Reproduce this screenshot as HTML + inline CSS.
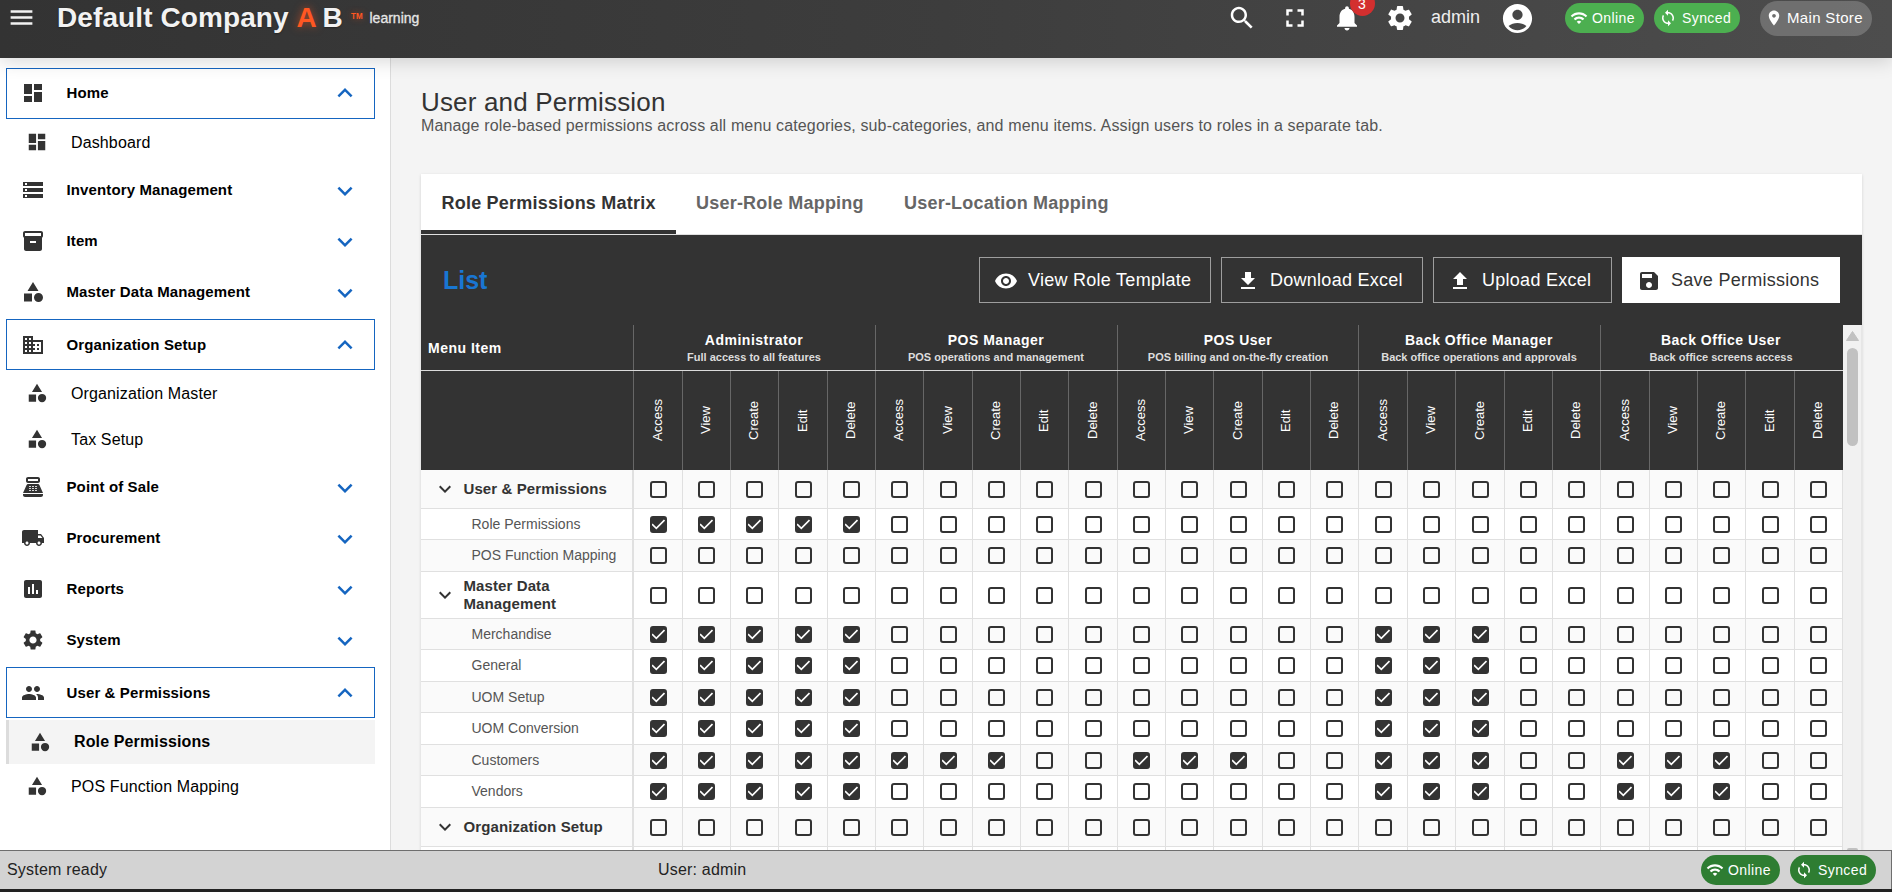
<!DOCTYPE html><html><head><meta charset="utf-8"><title>User and Permission</title><style>
*{box-sizing:border-box;margin:0;padding:0}
html,body{width:1892px;height:892px;overflow:hidden;background:#f4f4f4;font-family:"Liberation Sans",sans-serif}
.ic{position:absolute;display:block}
.t{position:absolute;white-space:nowrap;line-height:1}
#hdr{position:absolute;left:0;top:0;width:1892px;height:57.5px;background:linear-gradient(90deg,#333 0%,#3d3d3d 50%,#4d4d4d 100%);box-shadow:0 3px 18px rgba(0,0,0,.16);z-index:5}
#side{position:absolute;left:0;top:57px;width:391px;height:793px;background:#fff;border-right:1px solid #dcdcdc;z-index:2}
.chip{position:absolute;height:30px;border-radius:15px;background:#4caf50;color:#fff;font-size:14px}
.sbox{position:absolute;left:6px;width:369px;height:51px;border:1px solid #1565c0}
.cat{font-size:15px;font-weight:bold;color:#000;letter-spacing:.12px}
.sub{font-size:16px;color:#000;letter-spacing:.13px}

.btn{position:absolute;top:257px;height:46px;border:1px solid #9e9e9e;color:#fff;font-size:18px}
.rh{font-size:14px;font-weight:bold;color:#fff;letter-spacing:.5px}
.rs{font-size:11px;font-weight:bold;color:#ddd}
.vl{position:absolute;top:371px;height:99px;width:1px;background:#676767}
.vt{position:absolute;font-size:13px;color:#fff;line-height:13px;writing-mode:vertical-rl;transform:rotate(180deg)}
.row{position:absolute;left:421px;width:1422px}
.dl{position:absolute;width:1px;background:#e0e0e0}
.cb{position:absolute;width:17px;height:17px;border:2px solid #333;border-radius:3px;background:#fff}
.cb.on{background:#333}
.lab{position:absolute;font-size:14px;color:#555;line-height:14px;white-space:nowrap}
.grp{position:absolute;font-size:15px;font-weight:bold;color:#333;line-height:18px;white-space:nowrap}
</style></head><body>

<div id="hdr">
<svg class="ic" style="left:6.5px;top:3px;width:29px;height:29px;" viewBox="0 0 24 24"><path fill="#f2f2f2" d="M3 18h18v-2H3v2zm0-5h18v-2H3v2zm0-7v2h18V6H3z"/></svg>
<div class="t" style="left:57px;top:4px;font-size:28px;font-weight:bold;color:#f2f2f2;line-height:28px;letter-spacing:.1px;text-shadow:0 1px 2px rgba(0,0,0,.35)">Default Company</div>
<div class="t" style="left:296.5px;top:4px;font-size:28px;font-weight:bold;color:#ff5722;line-height:28px;text-shadow:0 0 8px rgba(255,87,34,.6)">A</div>
<div class="t" style="left:322.5px;top:4px;font-size:28px;font-weight:bold;color:#f2f2f2;line-height:28px;text-shadow:0 1px 2px rgba(0,0,0,.35)">B</div>
<div class="t" style="left:351px;top:12.3px;font-size:8px;font-weight:bold;color:#ff5722;line-height:8px;transform:scaleY(1.12);transform-origin:0 0;text-shadow:0 0 6px rgba(255,87,34,.5)">TM</div>
<div class="t" style="left:369.5px;top:11px;font-size:14px;color:#e6e6e6;line-height:14px;-webkit-text-stroke:.3px #e6e6e6">learning</div>
<svg class="ic" style="left:1227px;top:3px;width:30px;height:30px;" viewBox="0 0 24 24"><path fill="#fff" d="M15.5 14h-.79l-.28-.27C15.41 12.59 16 11.11 16 9.5 16 5.91 13.09 3 9.5 3S3 5.91 3 9.5 5.91 16 9.5 16c1.61 0 3.09-.59 4.23-1.57l.27.28v.79l5 4.99L20.49 19l-4.99-5zm-6 0C7.01 14 5 11.99 5 9.5S7.01 5 9.5 5 14 7.01 14 9.5 11.99 14 9.5 14z"/></svg>
<svg class="ic" style="left:1280px;top:3px;width:30px;height:30px;" viewBox="0 0 24 24"><path fill="#fff" d="M7 14H5v5h5v-2H7v-3zm-2-4h2V7h3V5H5v5zm12 7h-3v2h5v-5h-2v3zM14 5v2h3v3h2V5h-5z"/></svg>
<svg class="ic" style="left:1332px;top:3px;width:30px;height:30px;" viewBox="0 0 24 24"><path fill="#fff" d="M12 22c1.1 0 2-.9 2-2h-4c0 1.1.89 2 2 2zm6-6v-5c0-3.07-1.64-5.64-4.5-6.32V4c0-.83-.67-1.5-1.5-1.5s-1.5.67-1.5 1.5v.68C7.63 5.36 6 7.92 6 11v5l-2 2v1h16v-1l-2-2z"/></svg>
<div style="position:absolute;left:1349.5px;top:-9.3px;width:25px;height:25px;border-radius:12.5px;background:#d32f2f;color:#fff;font-size:14px;line-height:27px;text-align:center">3</div>
<svg class="ic" style="left:1385px;top:3px;width:30px;height:30px;" viewBox="0 0 24 24"><path fill="#fff" d="M19.14 12.94c.04-.3.06-.61.06-.94 0-.32-.02-.64-.07-.94l2.03-1.58c.18-.14.23-.41.12-.61l-1.92-3.32c-.12-.22-.37-.29-.59-.22l-2.39.96c-.5-.38-1.03-.7-1.62-.94l-.36-2.54c-.04-.24-.24-.41-.48-.41h-3.84c-.24 0-.43.17-.47.41l-.36 2.54c-.59.24-1.13.57-1.62.94l-2.39-.96c-.22-.08-.47 0-.59.22L2.74 8.87c-.12.21-.08.47.12.61l2.03 1.58c-.05.3-.09.63-.09.94s.02.64.07.94l-2.03 1.58c-.18.14-.23.41-.12.61l1.92 3.32c.12.22.37.29.59.22l2.39-.96c.5.38 1.03.7 1.62.94l.36 2.54c.05.24.24.41.48.41h3.84c.24 0 .44-.17.47-.41l.36-2.54c.59-.24 1.13-.56 1.62-.94l2.39.96c.22.08.47 0 .59-.22l1.92-3.32c.12-.22.07-.47-.12-.61l-2.01-1.58zM12 15.6c-1.98 0-3.6-1.62-3.6-3.6s1.62-3.6 3.6-3.6 3.6 1.62 3.6 3.6-1.62 3.6-3.6 3.6z"/></svg>
<div class="t" style="left:1431px;top:7.5px;font-size:18px;color:#eee;line-height:18px">admin</div>
<svg class="ic" style="left:1500px;top:1px;width:35px;height:35px;" viewBox="0 0 24 24"><path fill="#fff" d="M12 2C6.48 2 2 6.48 2 12s4.48 10 10 10 10-4.48 10-10S17.52 2 12 2zm0 4c1.93 0 3.5 1.57 3.5 3.5S13.93 13 12 13s-3.5-1.57-3.5-3.5S10.07 6 12 6zm0 14c-2.03 0-4.43-.82-6.14-2.88C7.55 15.8 9.64 15 12 15s4.45.8 6.14 2.12C16.43 19.18 14.03 20 12 20z"/></svg>
<div class="chip" style="left:1565px;top:3px;width:79px"><svg class="ic" style="left:5px;top:6px;width:18px;height:18px;" viewBox="0 0 24 24"><path fill="#fff" d="M1 9l2 2c4.97-4.97 13.03-4.97 18 0l2-2C16.93 2.93 7.08 2.93 1 9zm8 8l3 3 3-3c-1.65-1.66-4.34-1.66-6 0zm-4-4l2 2c2.76-2.76 7.24-2.76 10 0l2-2C15.14 9.14 8.87 9.14 5 13z"/></svg><div class="t" style="left:27px;top:8px;font-size:14px;letter-spacing:.4px">Online</div></div>
<div class="chip" style="left:1654px;top:3px;width:86px"><svg class="ic" style="left:5px;top:6px;width:18px;height:18px;" viewBox="0 0 24 24"><path fill="#fff" d="M12 4V1L8 5l4 4V6c3.31 0 6 2.69 6 6 0 1.01-.25 1.97-.7 2.8l1.46 1.46C19.54 15.03 20 13.57 20 12c0-4.42-3.58-8-8-8zm0 14c-3.31 0-6-2.69-6-6 0-1.01.25-1.97.7-2.8L5.24 7.74C4.46 8.97 4 10.43 4 12c0 4.42 3.58 8 8 8v3l4-4-4-4v3z"/></svg><div class="t" style="left:28px;top:8px;font-size:14px;letter-spacing:.4px">Synced</div></div>
<div class="chip" style="left:1760px;top:1px;width:112px;height:35px;border-radius:17.5px;background:rgba(255,255,255,.2)"><svg class="ic" style="left:5px;top:7.5px;width:18px;height:18px;" viewBox="0 0 24 24"><path fill="#fff" d="M12 2C8.13 2 5 5.13 5 9c0 5.25 7 13 7 13s7-7.75 7-13c0-3.87-3.13-7-7-7zm0 9.5c-1.38 0-2.5-1.12-2.5-2.5s1.12-2.5 2.5-2.5 2.5 1.12 2.5 2.5-1.12 2.5-2.5 2.5z"/></svg><div class="t" style="left:27px;top:9px;font-size:15px;letter-spacing:.33px">Main Store</div></div>
</div>
<div id="side">
<div class="sbox" style="top:11px"></div>
<svg class="ic" style="left:21px;top:23.599999999999994px;width:24px;height:24px;" viewBox="0 0 24 24"><path fill="#333" d="M3 13h8V3H3v10zm0 8h8v-6H3v6zm10 0h8V11h-8v10zm0-18v6h8V3h-8z"/></svg>
<div class="t cat" style="left:66.5px;top:27.599999999999994px;line-height:16px">Home</div>
<svg class="ic" style="left:330px;top:21.099999999999994px;width:30px;height:30px;" viewBox="0 0 24 24"><path fill="#1565c0" d="M12 8l-6 6 1.41 1.41L12 10.83l4.59 4.58L18 14z"/></svg>
<svg class="ic" style="left:21px;top:121.0px;width:24px;height:24px;" viewBox="0 0 24 24"><path fill="#333" d="M2 20h20v-4H2v4zm2-3h2v2H4v-2zM2 4v4h20V4H2zm4 3H4V5h2v2zm-4 7h20v-4H2v4zm2-3h2v2H4v-2z"/></svg>
<div class="t cat" style="left:66.5px;top:125.0px;line-height:16px">Inventory Management</div>
<svg class="ic" style="left:330px;top:118.5px;width:30px;height:30px;" viewBox="0 0 24 24"><path fill="#1565c0" d="M16.59 8.59L12 13.17 7.41 8.59 6 10l6 6 6-6z"/></svg>
<svg class="ic" style="left:21px;top:172.0px;width:24px;height:24px;" viewBox="0 0 24 24"><path fill="#333" d="M20 2H4c-1 0-2 .9-2 2v3.01c0 .72.43 1.34 1 1.69V20c0 1.1 1.1 2 2 2h14c.9 0 2-.9 2-2V8.7c.57-.35 1-.97 1-1.69V4c0-1.1-1-2-2-2zm-5 12H9v-2h6v2zm5-7H4V4l16-.02V7z"/></svg>
<div class="t cat" style="left:66.5px;top:176.0px;line-height:16px">Item</div>
<svg class="ic" style="left:330px;top:169.5px;width:30px;height:30px;" viewBox="0 0 24 24"><path fill="#1565c0" d="M16.59 8.59L12 13.17 7.41 8.59 6 10l6 6 6-6z"/></svg>
<svg class="ic" style="left:21px;top:223.0px;width:24px;height:24px;" viewBox="0 0 24 24"><path fill="#333" d="M12 2l-5.5 9h11zM17.5 13a4.5 4.5 0 1 0 0 9a4.5 4.5 0 1 0 0-9zM3 13.5h8v8H3z"/></svg>
<div class="t cat" style="left:66.5px;top:227.0px;line-height:16px">Master Data Management</div>
<svg class="ic" style="left:330px;top:220.5px;width:30px;height:30px;" viewBox="0 0 24 24"><path fill="#1565c0" d="M16.59 8.59L12 13.17 7.41 8.59 6 10l6 6 6-6z"/></svg>
<div class="sbox" style="top:262px"></div>
<svg class="ic" style="left:21px;top:275.8px;width:24px;height:24px;" viewBox="0 0 24 24"><path fill="#333" d="M12 7V3H2v18h20V7H12zM6 19H4v-2h2v2zm0-4H4v-2h2v2zm0-4H4V9h2v2zm0-4H4V5h2v2zm4 12H8v-2h2v2zm0-4H8v-2h2v2zm0-4H8V9h2v2zm0-4H8V5h2v2zm10 12h-8v-2h2v-2h-2v-2h2v-2h-2V9h8v10zm-2-8h-2v2h2v-2zm0 4h-2v2h2v-2z"/></svg>
<div class="t cat" style="left:66.5px;top:279.8px;line-height:16px">Organization Setup</div>
<svg class="ic" style="left:330px;top:273.3px;width:30px;height:30px;" viewBox="0 0 24 24"><path fill="#1565c0" d="M12 8l-6 6 1.41 1.41L12 10.83l4.59 4.58L18 14z"/></svg>
<svg class="ic" style="left:21px;top:418.0px;width:24px;height:24px;" viewBox="0 0 24 24"><path fill="#333" d="M17 2H7c-1.1 0-2 .9-2 2v2c0 1.1.9 2 2 2h10c1.1 0 2-.9 2-2V4c0-1.1-.9-2-2-2zm0 4H7V4h10v2zm3 16H4c-1.1 0-2-.9-2-2v-1h20v1c0 1.1-.9 2-2 2zm-1.47-11.81C18.21 9.47 17.49 9 16.7 9H7.3c-.79 0-1.51.47-1.83 1.19L2 18h20l-3.47-7.81zM9.5 16h-1c-.28 0-.5-.22-.5-.5s.22-.5.5-.5h1c.28 0 .5.22.5.5s-.22.5-.5.5zm0-2h-1c-.28 0-.5-.22-.5-.5s.22-.5.5-.5h1c.28 0 .5.22.5.5s-.22.5-.5.5zm0-2h-1c-.28 0-.5-.22-.5-.5s.22-.5.5-.5h1c.28 0 .5.22.5.5s-.22.5-.5.5zm3 4h-1c-.28 0-.5-.22-.5-.5s.22-.5.5-.5h1c.28 0 .5.22.5.5s-.22.5-.5.5zm0-2h-1c-.28 0-.5-.22-.5-.5s.22-.5.5-.5h1c.28 0 .5.22.5.5s-.22.5-.5.5zm0-2h-1c-.28 0-.5-.22-.5-.5s.22-.5.5-.5h1c.28 0 .5.22.5.5s-.22.5-.5.5zm3 4h-1c-.28 0-.5-.22-.5-.5s.22-.5.5-.5h1c.28 0 .5.22.5.5s-.22.5-.5.5zm0-2h-1c-.28 0-.5-.22-.5-.5s.22-.5.5-.5h1c.28 0 .5.22.5.5s-.22.5-.5.5zm0-2h-1c-.28 0-.5-.22-.5-.5s.22-.5.5-.5h1c.28 0 .5.22.5.5s-.22.5-.5.5z"/></svg>
<div class="t cat" style="left:66.5px;top:422.0px;line-height:16px">Point of Sale</div>
<svg class="ic" style="left:330px;top:415.5px;width:30px;height:30px;" viewBox="0 0 24 24"><path fill="#1565c0" d="M16.59 8.59L12 13.17 7.41 8.59 6 10l6 6 6-6z"/></svg>
<svg class="ic" style="left:21px;top:469.0px;width:24px;height:24px;" viewBox="0 0 24 24"><path fill="#333" d="M20 8h-3V4H3c-1.1 0-2 .9-2 2v11h2c0 1.66 1.34 3 3 3s3-1.34 3-3h6c0 1.66 1.34 3 3 3s3-1.34 3-3h2v-5l-3-4zM6 18.5c-.83 0-1.5-.67-1.5-1.5s.67-1.5 1.5-1.5 1.5.67 1.5 1.5-.67 1.5-1.5 1.5zm13.5-9l1.96 2.5H17V9.5h2.5zm-1.5 9c-.83 0-1.5-.67-1.5-1.5s.67-1.5 1.5-1.5 1.5.67 1.5 1.5-.67 1.5-1.5 1.5z"/></svg>
<div class="t cat" style="left:66.5px;top:473.0px;line-height:16px">Procurement</div>
<svg class="ic" style="left:330px;top:466.5px;width:30px;height:30px;" viewBox="0 0 24 24"><path fill="#1565c0" d="M16.59 8.59L12 13.17 7.41 8.59 6 10l6 6 6-6z"/></svg>
<svg class="ic" style="left:21px;top:520.0px;width:24px;height:24px;" viewBox="0 0 24 24"><path fill="#333" d="M19 3H5c-1.1 0-2 .9-2 2v14c0 1.1.9 2 2 2h14c1.1 0 2-.9 2-2V5c0-1.1-.9-2-2-2zM9 17H7v-7h2v7zm4 0h-2V7h2v10zm4 0h-2v-4h2v4z"/></svg>
<div class="t cat" style="left:66.5px;top:524.0px;line-height:16px">Reports</div>
<svg class="ic" style="left:330px;top:517.5px;width:30px;height:30px;" viewBox="0 0 24 24"><path fill="#1565c0" d="M16.59 8.59L12 13.17 7.41 8.59 6 10l6 6 6-6z"/></svg>
<svg class="ic" style="left:21px;top:571.0px;width:24px;height:24px;" viewBox="0 0 24 24"><path fill="#333" d="M19.14 12.94c.04-.3.06-.61.06-.94 0-.32-.02-.64-.07-.94l2.03-1.58c.18-.14.23-.41.12-.61l-1.92-3.32c-.12-.22-.37-.29-.59-.22l-2.39.96c-.5-.38-1.03-.7-1.62-.94l-.36-2.54c-.04-.24-.24-.41-.48-.41h-3.84c-.24 0-.43.17-.47.41l-.36 2.54c-.59.24-1.13.57-1.62.94l-2.39-.96c-.22-.08-.47 0-.59.22L2.74 8.87c-.12.21-.08.47.12.61l2.03 1.58c-.05.3-.09.63-.09.94s.02.64.07.94l-2.03 1.58c-.18.14-.23.41-.12.61l1.92 3.32c.12.22.37.29.59.22l2.39-.96c.5.38 1.03.7 1.62.94l.36 2.54c.05.24.24.41.48.41h3.84c.24 0 .44-.17.47-.41l.36-2.54c.59-.24 1.13-.56 1.62-.94l2.39.96c.22.08.47 0 .59-.22l1.92-3.32c.12-.22.07-.47-.12-.61l-2.01-1.58zM12 15.6c-1.98 0-3.6-1.62-3.6-3.6s1.62-3.6 3.6-3.6 3.6 1.62 3.6 3.6-1.62 3.6-3.6 3.6z"/></svg>
<div class="t cat" style="left:66.5px;top:575.0px;line-height:16px">System</div>
<svg class="ic" style="left:330px;top:568.5px;width:30px;height:30px;" viewBox="0 0 24 24"><path fill="#1565c0" d="M16.59 8.59L12 13.17 7.41 8.59 6 10l6 6 6-6z"/></svg>
<div class="sbox" style="top:610px"></div>
<svg class="ic" style="left:21px;top:623.8px;width:24px;height:24px;" viewBox="0 0 24 24"><path fill="#333" d="M16 11c1.66 0 2.99-1.34 2.99-3S17.66 5 16 5c-1.66 0-3 1.34-3 3s1.34 3 3 3zm-8 0c1.66 0 2.99-1.34 2.99-3S9.66 5 8 5C6.34 5 5 6.34 5 8s1.34 3 3 3zm0 2c-2.33 0-7 1.17-7 3.5V19h14v-2.5c0-2.33-4.67-3.5-7-3.5zm8 0c-.29 0-.62.02-.97.05 1.16.84 1.97 1.97 1.97 3.45V19h6v-2.5c0-2.33-4.67-3.5-7-3.5z"/></svg>
<div class="t cat" style="left:66.5px;top:627.8px;line-height:16px">User &amp; Permissions</div>
<svg class="ic" style="left:330px;top:621.3px;width:30px;height:30px;" viewBox="0 0 24 24"><path fill="#1565c0" d="M12 8l-6 6 1.41 1.41L12 10.83l4.59 4.58L18 14z"/></svg>
<svg class="ic" style="left:26px;top:74px;width:22px;height:22px;" viewBox="0 0 24 24"><path fill="#333" d="M3 13h8V3H3v10zm0 8h8v-6H3v6zm10 0h8V11h-8v10zm0-18v6h8V3h-8z"/></svg>
<div class="t sub" style="left:71px;top:76.5px;line-height:17px">Dashboard</div>
<svg class="ic" style="left:26px;top:325px;width:22px;height:22px;" viewBox="0 0 24 24"><path fill="#333" d="M12 2l-5.5 9h11zM17.5 13a4.5 4.5 0 1 0 0 9a4.5 4.5 0 1 0 0-9zM3 13.5h8v8H3z"/></svg>
<div class="t sub" style="left:71px;top:327.5px;line-height:17px">Organization Master</div>
<svg class="ic" style="left:26px;top:371px;width:22px;height:22px;" viewBox="0 0 24 24"><path fill="#333" d="M12 2l-5.5 9h11zM17.5 13a4.5 4.5 0 1 0 0 9a4.5 4.5 0 1 0 0-9zM3 13.5h8v8H3z"/></svg>
<div class="t sub" style="left:71px;top:373.5px;line-height:17px">Tax Setup</div>
<svg class="ic" style="left:26px;top:718px;width:22px;height:22px;" viewBox="0 0 24 24"><path fill="#333" d="M12 2l-5.5 9h11zM17.5 13a4.5 4.5 0 1 0 0 9a4.5 4.5 0 1 0 0-9zM3 13.5h8v8H3z"/></svg>
<div class="t sub" style="left:71px;top:720.5px;line-height:17px">POS Function Mapping</div>
<div style="position:absolute;left:6px;top:663px;width:369px;height:44px;background:#f4f4f4;border-left:3px solid #dcdcdc"></div>
<svg class="ic" style="left:29px;top:674px;width:22px;height:22px;" viewBox="0 0 24 24"><path fill="#333" d="M12 2l-5.5 9h11zM17.5 13a4.5 4.5 0 1 0 0 9a4.5 4.5 0 1 0 0-9zM3 13.5h8v8H3z"/></svg>
<div class="t sub" style="left:74px;top:675.5px;line-height:17px;font-weight:bold">Role Permissions</div>
</div>
<div class="t" style="left:421px;top:88.7px;font-size:26px;color:#333;line-height:26px;letter-spacing:.17px">User and Permission</div>
<div class="t" style="left:421px;top:118px;font-size:16px;color:#555;line-height:16px;letter-spacing:.14px">Manage role-based permissions across all menu categories, sub-categories, and menu items. Assign users to roles in a separate tab.</div>
<div style="position:absolute;left:421px;top:174px;width:1441px;height:700px;background:#fff;box-shadow:0 1px 3px rgba(0,0,0,.14)"></div>
<div class="t" style="left:441.5px;top:193.5px;font-size:18px;font-weight:bold;color:#333;line-height:18px;letter-spacing:.22px">Role Permissions Matrix</div>
<div class="t" style="left:696px;top:193.5px;font-size:18px;font-weight:bold;color:#666;line-height:18px;letter-spacing:.22px">User-Role Mapping</div>
<div class="t" style="left:904px;top:193.5px;font-size:18px;font-weight:bold;color:#666;line-height:18px;letter-spacing:.22px">User-Location Mapping</div>
<div style="position:absolute;left:421px;top:234px;width:1441px;height:1px;background:#e0e0e0"></div>
<div style="position:absolute;left:421px;top:230px;width:255px;height:4px;background:#333"></div>
<div style="position:absolute;left:421px;top:235px;width:1441px;height:615px;background:#333"></div>
<div class="t" style="left:443px;top:267.5px;font-size:25px;font-weight:bold;color:#1976d2;line-height:25px">List</div>
<div class="btn" style="left:979px;width:232px;"><svg class="ic" style="left:14px;top:10.8px;width:24px;height:24px;" viewBox="0 0 24 24"><path fill="#fff" d="M12 4.5C7 4.5 2.73 7.61 1 12c1.73 4.39 6 7.5 11 7.5s9.27-3.11 11-7.5c-1.73-4.39-6-7.5-11-7.5zM12 17c-2.76 0-5-2.24-5-5s2.24-5 5-5 5 2.24 5 5-2.24 5-5 5zm0-8c-1.66 0-3 1.34-3 3s1.34 3 3 3 3-1.34 3-3-1.34-3-3-3z"/></svg><div class="t" style="left:48px;top:12.8px;font-size:18px;line-height:18px;letter-spacing:.27px">View Role Template</div></div>
<div class="btn" style="left:1221px;width:202px;"><svg class="ic" style="left:14px;top:10.8px;width:24px;height:24px;" viewBox="0 0 24 24"><path fill="#fff" d="M19 9h-4V3H9v6H5l7 7 7-7zM5 18v2h14v-2H5z"/></svg><div class="t" style="left:48px;top:12.8px;font-size:18px;line-height:18px;letter-spacing:.27px">Download Excel</div></div>
<div class="btn" style="left:1433px;width:179px;"><svg class="ic" style="left:14px;top:10.8px;width:24px;height:24px;" viewBox="0 0 24 24"><path fill="#fff" d="M9 16h6v-6h4l-7-7-7 7h4zm-4 2h14v2H5z"/></svg><div class="t" style="left:48px;top:12.8px;font-size:18px;line-height:18px;letter-spacing:.27px">Upload Excel</div></div>
<div class="btn" style="left:1622px;width:218px;background:#fff;border-color:#fff;color:#333;"><svg class="ic" style="left:14px;top:10.8px;width:24px;height:24px;" viewBox="0 0 24 24"><path fill="#333" d="M17 3H5c-1.11 0-2 .9-2 2v14c0 1.1.89 2 2 2h14c1.1 0 2-.9 2-2V7l-4-4zm-5 16c-1.66 0-3-1.34-3-3s1.34-3 3-3 3 1.34 3 3-1.34 3-3 3zm3-10H5V5h10v4z"/></svg><div class="t" style="left:48px;top:12.8px;font-size:18px;line-height:18px;letter-spacing:.27px">Save Permissions</div></div>
<div class="t rh" style="left:428px;top:341px;line-height:14px">Menu Item</div>
<div style="position:absolute;left:633.00px;top:325px;width:1px;height:45px;background:#676767"></div>
<div class="t rh" style="left:633.00px;width:242.00px;text-align:center;top:333px;line-height:14px">Administrator</div>
<div class="t rs" style="left:633.00px;width:242.00px;text-align:center;top:351.5px;line-height:11px">Full access to all features</div>
<div style="position:absolute;left:875.00px;top:325px;width:1px;height:45px;background:#676767"></div>
<div class="t rh" style="left:875.00px;width:242.00px;text-align:center;top:333px;line-height:14px">POS Manager</div>
<div class="t rs" style="left:875.00px;width:242.00px;text-align:center;top:351.5px;line-height:11px">POS operations and management</div>
<div style="position:absolute;left:1117.00px;top:325px;width:1px;height:45px;background:#676767"></div>
<div class="t rh" style="left:1117.00px;width:242.00px;text-align:center;top:333px;line-height:14px">POS User</div>
<div class="t rs" style="left:1117.00px;width:242.00px;text-align:center;top:351.5px;line-height:11px">POS billing and on-the-fly creation</div>
<div style="position:absolute;left:1358.00px;top:325px;width:1px;height:45px;background:#676767"></div>
<div class="t rh" style="left:1358.00px;width:242.00px;text-align:center;top:333px;line-height:14px">Back Office Manager</div>
<div class="t rs" style="left:1358.00px;width:242.00px;text-align:center;top:351.5px;line-height:11px">Back office operations and approvals</div>
<div style="position:absolute;left:1600.00px;top:325px;width:1px;height:45px;background:#676767"></div>
<div class="t rh" style="left:1600.00px;width:242.00px;text-align:center;top:333px;line-height:14px">Back Office User</div>
<div class="t rs" style="left:1600.00px;width:242.00px;text-align:center;top:351.5px;line-height:11px">Back office screens access</div>
<div style="position:absolute;left:421px;top:370px;width:1422px;height:1px;background:#dcdcdc"></div>
<div class="vl" style="left:633.00px"></div>
<div class="vt" style="left:650.50px;top:370.5px;height:99px;text-align:center">Access</div>
<div class="vl" style="left:682.00px"></div>
<div class="vt" style="left:699.00px;top:370.5px;height:99px;text-align:center">View</div>
<div class="vl" style="left:730.00px"></div>
<div class="vt" style="left:747.00px;top:370.5px;height:99px;text-align:center">Create</div>
<div class="vl" style="left:778.00px"></div>
<div class="vt" style="left:795.50px;top:370.5px;height:99px;text-align:center">Edit</div>
<div class="vl" style="left:827.00px"></div>
<div class="vt" style="left:844.00px;top:370.5px;height:99px;text-align:center">Delete</div>
<div class="vl" style="left:875.00px"></div>
<div class="vt" style="left:892.00px;top:370.5px;height:99px;text-align:center">Access</div>
<div class="vl" style="left:923.00px"></div>
<div class="vt" style="left:940.50px;top:370.5px;height:99px;text-align:center">View</div>
<div class="vl" style="left:972.00px"></div>
<div class="vt" style="left:989.00px;top:370.5px;height:99px;text-align:center">Create</div>
<div class="vl" style="left:1020.00px"></div>
<div class="vt" style="left:1037.00px;top:370.5px;height:99px;text-align:center">Edit</div>
<div class="vl" style="left:1068.00px"></div>
<div class="vt" style="left:1085.50px;top:370.5px;height:99px;text-align:center">Delete</div>
<div class="vl" style="left:1117.00px"></div>
<div class="vt" style="left:1134.00px;top:370.5px;height:99px;text-align:center">Access</div>
<div class="vl" style="left:1165.00px"></div>
<div class="vt" style="left:1182.00px;top:370.5px;height:99px;text-align:center">View</div>
<div class="vl" style="left:1213.00px"></div>
<div class="vt" style="left:1230.50px;top:370.5px;height:99px;text-align:center">Create</div>
<div class="vl" style="left:1262.00px"></div>
<div class="vt" style="left:1279.00px;top:370.5px;height:99px;text-align:center">Edit</div>
<div class="vl" style="left:1310.00px"></div>
<div class="vt" style="left:1327.00px;top:370.5px;height:99px;text-align:center">Delete</div>
<div class="vl" style="left:1358.00px"></div>
<div class="vt" style="left:1375.50px;top:370.5px;height:99px;text-align:center">Access</div>
<div class="vl" style="left:1407.00px"></div>
<div class="vt" style="left:1424.00px;top:370.5px;height:99px;text-align:center">View</div>
<div class="vl" style="left:1455.00px"></div>
<div class="vt" style="left:1472.50px;top:370.5px;height:99px;text-align:center">Create</div>
<div class="vl" style="left:1504.00px"></div>
<div class="vt" style="left:1521.00px;top:370.5px;height:99px;text-align:center">Edit</div>
<div class="vl" style="left:1552.00px"></div>
<div class="vt" style="left:1569.00px;top:370.5px;height:99px;text-align:center">Delete</div>
<div class="vl" style="left:1600.00px"></div>
<div class="vt" style="left:1617.50px;top:370.5px;height:99px;text-align:center">Access</div>
<div class="vl" style="left:1649.00px"></div>
<div class="vt" style="left:1666.00px;top:370.5px;height:99px;text-align:center">View</div>
<div class="vl" style="left:1697.00px"></div>
<div class="vt" style="left:1714.00px;top:370.5px;height:99px;text-align:center">Create</div>
<div class="vl" style="left:1745.00px"></div>
<div class="vt" style="left:1762.50px;top:370.5px;height:99px;text-align:center">Edit</div>
<div class="vl" style="left:1794.00px"></div>
<div class="vt" style="left:1811.00px;top:370.5px;height:99px;text-align:center">Delete</div>
<div style="position:absolute;left:421px;top:470px;width:1422px;height:380px;overflow:hidden;background:#fff">
<div style="position:absolute;left:0;top:0px;width:1422px;height:38.5px;background:#fafafa;border-bottom:1px solid #e0e0e0"></div>
<svg class="ic" style="left:12.2px;top:7.25px;width:24px;height:24px;" viewBox="0 0 24 24"><path fill="#333" d="M16.59 8.59L12 13.17 7.41 8.59 6 10l6 6 6-6z"/></svg>
<div class="grp" style="left:42.5px;top:10.45px;letter-spacing:.1px">User &amp; Permissions</div>
<div class="cb" style="left:228.50px;top:10.75px;background:#fafafa"></div>
<div class="cb" style="left:277.00px;top:10.75px;background:#fafafa"></div>
<div class="cb" style="left:325.00px;top:10.75px;background:#fafafa"></div>
<div class="cb" style="left:373.50px;top:10.75px;background:#fafafa"></div>
<div class="cb" style="left:422.00px;top:10.75px;background:#fafafa"></div>
<div class="cb" style="left:470.00px;top:10.75px;background:#fafafa"></div>
<div class="cb" style="left:518.50px;top:10.75px;background:#fafafa"></div>
<div class="cb" style="left:567.00px;top:10.75px;background:#fafafa"></div>
<div class="cb" style="left:615.00px;top:10.75px;background:#fafafa"></div>
<div class="cb" style="left:663.50px;top:10.75px;background:#fafafa"></div>
<div class="cb" style="left:712.00px;top:10.75px;background:#fafafa"></div>
<div class="cb" style="left:760.00px;top:10.75px;background:#fafafa"></div>
<div class="cb" style="left:808.50px;top:10.75px;background:#fafafa"></div>
<div class="cb" style="left:857.00px;top:10.75px;background:#fafafa"></div>
<div class="cb" style="left:905.00px;top:10.75px;background:#fafafa"></div>
<div class="cb" style="left:953.50px;top:10.75px;background:#fafafa"></div>
<div class="cb" style="left:1002.00px;top:10.75px;background:#fafafa"></div>
<div class="cb" style="left:1050.50px;top:10.75px;background:#fafafa"></div>
<div class="cb" style="left:1099.00px;top:10.75px;background:#fafafa"></div>
<div class="cb" style="left:1147.00px;top:10.75px;background:#fafafa"></div>
<div class="cb" style="left:1195.50px;top:10.75px;background:#fafafa"></div>
<div class="cb" style="left:1244.00px;top:10.75px;background:#fafafa"></div>
<div class="cb" style="left:1292.00px;top:10.75px;background:#fafafa"></div>
<div class="cb" style="left:1340.50px;top:10.75px;background:#fafafa"></div>
<div class="cb" style="left:1389.00px;top:10.75px;background:#fafafa"></div>
<div style="position:absolute;left:0;top:38.5px;width:1422px;height:31.5px;background:#fff;border-bottom:1px solid #e0e0e0"></div>
<div class="lab" style="left:50.5px;top:46.75px">Role Permissions</div>
<div class="cb on" style="left:228.50px;top:45.75px"><svg width="13" height="13" viewBox="0 0 13 13" style="position:absolute;left:0;top:0"><polyline points="0,6.2 4.3,10.3 12.5,2" fill="none" stroke="#fff" stroke-width="1.7"/></svg></div>
<div class="cb on" style="left:277.00px;top:45.75px"><svg width="13" height="13" viewBox="0 0 13 13" style="position:absolute;left:0;top:0"><polyline points="0,6.2 4.3,10.3 12.5,2" fill="none" stroke="#fff" stroke-width="1.7"/></svg></div>
<div class="cb on" style="left:325.00px;top:45.75px"><svg width="13" height="13" viewBox="0 0 13 13" style="position:absolute;left:0;top:0"><polyline points="0,6.2 4.3,10.3 12.5,2" fill="none" stroke="#fff" stroke-width="1.7"/></svg></div>
<div class="cb on" style="left:373.50px;top:45.75px"><svg width="13" height="13" viewBox="0 0 13 13" style="position:absolute;left:0;top:0"><polyline points="0,6.2 4.3,10.3 12.5,2" fill="none" stroke="#fff" stroke-width="1.7"/></svg></div>
<div class="cb on" style="left:422.00px;top:45.75px"><svg width="13" height="13" viewBox="0 0 13 13" style="position:absolute;left:0;top:0"><polyline points="0,6.2 4.3,10.3 12.5,2" fill="none" stroke="#fff" stroke-width="1.7"/></svg></div>
<div class="cb" style="left:470.00px;top:45.75px;background:#fff"></div>
<div class="cb" style="left:518.50px;top:45.75px;background:#fff"></div>
<div class="cb" style="left:567.00px;top:45.75px;background:#fff"></div>
<div class="cb" style="left:615.00px;top:45.75px;background:#fff"></div>
<div class="cb" style="left:663.50px;top:45.75px;background:#fff"></div>
<div class="cb" style="left:712.00px;top:45.75px;background:#fff"></div>
<div class="cb" style="left:760.00px;top:45.75px;background:#fff"></div>
<div class="cb" style="left:808.50px;top:45.75px;background:#fff"></div>
<div class="cb" style="left:857.00px;top:45.75px;background:#fff"></div>
<div class="cb" style="left:905.00px;top:45.75px;background:#fff"></div>
<div class="cb" style="left:953.50px;top:45.75px;background:#fff"></div>
<div class="cb" style="left:1002.00px;top:45.75px;background:#fff"></div>
<div class="cb" style="left:1050.50px;top:45.75px;background:#fff"></div>
<div class="cb" style="left:1099.00px;top:45.75px;background:#fff"></div>
<div class="cb" style="left:1147.00px;top:45.75px;background:#fff"></div>
<div class="cb" style="left:1195.50px;top:45.75px;background:#fff"></div>
<div class="cb" style="left:1244.00px;top:45.75px;background:#fff"></div>
<div class="cb" style="left:1292.00px;top:45.75px;background:#fff"></div>
<div class="cb" style="left:1340.50px;top:45.75px;background:#fff"></div>
<div class="cb" style="left:1389.00px;top:45.75px;background:#fff"></div>
<div style="position:absolute;left:0;top:70px;width:1422px;height:31.5px;background:#fafafa;border-bottom:1px solid #e0e0e0"></div>
<div class="lab" style="left:50.5px;top:78.25px">POS Function Mapping</div>
<div class="cb" style="left:228.50px;top:77.25px;background:#fafafa"></div>
<div class="cb" style="left:277.00px;top:77.25px;background:#fafafa"></div>
<div class="cb" style="left:325.00px;top:77.25px;background:#fafafa"></div>
<div class="cb" style="left:373.50px;top:77.25px;background:#fafafa"></div>
<div class="cb" style="left:422.00px;top:77.25px;background:#fafafa"></div>
<div class="cb" style="left:470.00px;top:77.25px;background:#fafafa"></div>
<div class="cb" style="left:518.50px;top:77.25px;background:#fafafa"></div>
<div class="cb" style="left:567.00px;top:77.25px;background:#fafafa"></div>
<div class="cb" style="left:615.00px;top:77.25px;background:#fafafa"></div>
<div class="cb" style="left:663.50px;top:77.25px;background:#fafafa"></div>
<div class="cb" style="left:712.00px;top:77.25px;background:#fafafa"></div>
<div class="cb" style="left:760.00px;top:77.25px;background:#fafafa"></div>
<div class="cb" style="left:808.50px;top:77.25px;background:#fafafa"></div>
<div class="cb" style="left:857.00px;top:77.25px;background:#fafafa"></div>
<div class="cb" style="left:905.00px;top:77.25px;background:#fafafa"></div>
<div class="cb" style="left:953.50px;top:77.25px;background:#fafafa"></div>
<div class="cb" style="left:1002.00px;top:77.25px;background:#fafafa"></div>
<div class="cb" style="left:1050.50px;top:77.25px;background:#fafafa"></div>
<div class="cb" style="left:1099.00px;top:77.25px;background:#fafafa"></div>
<div class="cb" style="left:1147.00px;top:77.25px;background:#fafafa"></div>
<div class="cb" style="left:1195.50px;top:77.25px;background:#fafafa"></div>
<div class="cb" style="left:1244.00px;top:77.25px;background:#fafafa"></div>
<div class="cb" style="left:1292.00px;top:77.25px;background:#fafafa"></div>
<div class="cb" style="left:1340.50px;top:77.25px;background:#fafafa"></div>
<div class="cb" style="left:1389.00px;top:77.25px;background:#fafafa"></div>
<div style="position:absolute;left:0;top:101.5px;width:1422px;height:47px;background:#fff;border-bottom:1px solid #e0e0e0"></div>
<svg class="ic" style="left:12.2px;top:113.0px;width:24px;height:24px;" viewBox="0 0 24 24"><path fill="#333" d="M16.59 8.59L12 13.17 7.41 8.59 6 10l6 6 6-6z"/></svg>
<div class="grp" style="left:42.5px;top:106.50px;white-space:normal;letter-spacing:.1px">Master Data<br>Management</div>
<div class="cb" style="left:228.50px;top:116.50px;background:#fff"></div>
<div class="cb" style="left:277.00px;top:116.50px;background:#fff"></div>
<div class="cb" style="left:325.00px;top:116.50px;background:#fff"></div>
<div class="cb" style="left:373.50px;top:116.50px;background:#fff"></div>
<div class="cb" style="left:422.00px;top:116.50px;background:#fff"></div>
<div class="cb" style="left:470.00px;top:116.50px;background:#fff"></div>
<div class="cb" style="left:518.50px;top:116.50px;background:#fff"></div>
<div class="cb" style="left:567.00px;top:116.50px;background:#fff"></div>
<div class="cb" style="left:615.00px;top:116.50px;background:#fff"></div>
<div class="cb" style="left:663.50px;top:116.50px;background:#fff"></div>
<div class="cb" style="left:712.00px;top:116.50px;background:#fff"></div>
<div class="cb" style="left:760.00px;top:116.50px;background:#fff"></div>
<div class="cb" style="left:808.50px;top:116.50px;background:#fff"></div>
<div class="cb" style="left:857.00px;top:116.50px;background:#fff"></div>
<div class="cb" style="left:905.00px;top:116.50px;background:#fff"></div>
<div class="cb" style="left:953.50px;top:116.50px;background:#fff"></div>
<div class="cb" style="left:1002.00px;top:116.50px;background:#fff"></div>
<div class="cb" style="left:1050.50px;top:116.50px;background:#fff"></div>
<div class="cb" style="left:1099.00px;top:116.50px;background:#fff"></div>
<div class="cb" style="left:1147.00px;top:116.50px;background:#fff"></div>
<div class="cb" style="left:1195.50px;top:116.50px;background:#fff"></div>
<div class="cb" style="left:1244.00px;top:116.50px;background:#fff"></div>
<div class="cb" style="left:1292.00px;top:116.50px;background:#fff"></div>
<div class="cb" style="left:1340.50px;top:116.50px;background:#fff"></div>
<div class="cb" style="left:1389.00px;top:116.50px;background:#fff"></div>
<div style="position:absolute;left:0;top:148.5px;width:1422px;height:31.5px;background:#fafafa;border-bottom:1px solid #e0e0e0"></div>
<div class="lab" style="left:50.5px;top:156.75px">Merchandise</div>
<div class="cb on" style="left:228.50px;top:155.75px"><svg width="13" height="13" viewBox="0 0 13 13" style="position:absolute;left:0;top:0"><polyline points="0,6.2 4.3,10.3 12.5,2" fill="none" stroke="#fff" stroke-width="1.7"/></svg></div>
<div class="cb on" style="left:277.00px;top:155.75px"><svg width="13" height="13" viewBox="0 0 13 13" style="position:absolute;left:0;top:0"><polyline points="0,6.2 4.3,10.3 12.5,2" fill="none" stroke="#fff" stroke-width="1.7"/></svg></div>
<div class="cb on" style="left:325.00px;top:155.75px"><svg width="13" height="13" viewBox="0 0 13 13" style="position:absolute;left:0;top:0"><polyline points="0,6.2 4.3,10.3 12.5,2" fill="none" stroke="#fff" stroke-width="1.7"/></svg></div>
<div class="cb on" style="left:373.50px;top:155.75px"><svg width="13" height="13" viewBox="0 0 13 13" style="position:absolute;left:0;top:0"><polyline points="0,6.2 4.3,10.3 12.5,2" fill="none" stroke="#fff" stroke-width="1.7"/></svg></div>
<div class="cb on" style="left:422.00px;top:155.75px"><svg width="13" height="13" viewBox="0 0 13 13" style="position:absolute;left:0;top:0"><polyline points="0,6.2 4.3,10.3 12.5,2" fill="none" stroke="#fff" stroke-width="1.7"/></svg></div>
<div class="cb" style="left:470.00px;top:155.75px;background:#fafafa"></div>
<div class="cb" style="left:518.50px;top:155.75px;background:#fafafa"></div>
<div class="cb" style="left:567.00px;top:155.75px;background:#fafafa"></div>
<div class="cb" style="left:615.00px;top:155.75px;background:#fafafa"></div>
<div class="cb" style="left:663.50px;top:155.75px;background:#fafafa"></div>
<div class="cb" style="left:712.00px;top:155.75px;background:#fafafa"></div>
<div class="cb" style="left:760.00px;top:155.75px;background:#fafafa"></div>
<div class="cb" style="left:808.50px;top:155.75px;background:#fafafa"></div>
<div class="cb" style="left:857.00px;top:155.75px;background:#fafafa"></div>
<div class="cb" style="left:905.00px;top:155.75px;background:#fafafa"></div>
<div class="cb on" style="left:953.50px;top:155.75px"><svg width="13" height="13" viewBox="0 0 13 13" style="position:absolute;left:0;top:0"><polyline points="0,6.2 4.3,10.3 12.5,2" fill="none" stroke="#fff" stroke-width="1.7"/></svg></div>
<div class="cb on" style="left:1002.00px;top:155.75px"><svg width="13" height="13" viewBox="0 0 13 13" style="position:absolute;left:0;top:0"><polyline points="0,6.2 4.3,10.3 12.5,2" fill="none" stroke="#fff" stroke-width="1.7"/></svg></div>
<div class="cb on" style="left:1050.50px;top:155.75px"><svg width="13" height="13" viewBox="0 0 13 13" style="position:absolute;left:0;top:0"><polyline points="0,6.2 4.3,10.3 12.5,2" fill="none" stroke="#fff" stroke-width="1.7"/></svg></div>
<div class="cb" style="left:1099.00px;top:155.75px;background:#fafafa"></div>
<div class="cb" style="left:1147.00px;top:155.75px;background:#fafafa"></div>
<div class="cb" style="left:1195.50px;top:155.75px;background:#fafafa"></div>
<div class="cb" style="left:1244.00px;top:155.75px;background:#fafafa"></div>
<div class="cb" style="left:1292.00px;top:155.75px;background:#fafafa"></div>
<div class="cb" style="left:1340.50px;top:155.75px;background:#fafafa"></div>
<div class="cb" style="left:1389.00px;top:155.75px;background:#fafafa"></div>
<div style="position:absolute;left:0;top:180px;width:1422px;height:31.5px;background:#fff;border-bottom:1px solid #e0e0e0"></div>
<div class="lab" style="left:50.5px;top:188.25px">General</div>
<div class="cb on" style="left:228.50px;top:187.25px"><svg width="13" height="13" viewBox="0 0 13 13" style="position:absolute;left:0;top:0"><polyline points="0,6.2 4.3,10.3 12.5,2" fill="none" stroke="#fff" stroke-width="1.7"/></svg></div>
<div class="cb on" style="left:277.00px;top:187.25px"><svg width="13" height="13" viewBox="0 0 13 13" style="position:absolute;left:0;top:0"><polyline points="0,6.2 4.3,10.3 12.5,2" fill="none" stroke="#fff" stroke-width="1.7"/></svg></div>
<div class="cb on" style="left:325.00px;top:187.25px"><svg width="13" height="13" viewBox="0 0 13 13" style="position:absolute;left:0;top:0"><polyline points="0,6.2 4.3,10.3 12.5,2" fill="none" stroke="#fff" stroke-width="1.7"/></svg></div>
<div class="cb on" style="left:373.50px;top:187.25px"><svg width="13" height="13" viewBox="0 0 13 13" style="position:absolute;left:0;top:0"><polyline points="0,6.2 4.3,10.3 12.5,2" fill="none" stroke="#fff" stroke-width="1.7"/></svg></div>
<div class="cb on" style="left:422.00px;top:187.25px"><svg width="13" height="13" viewBox="0 0 13 13" style="position:absolute;left:0;top:0"><polyline points="0,6.2 4.3,10.3 12.5,2" fill="none" stroke="#fff" stroke-width="1.7"/></svg></div>
<div class="cb" style="left:470.00px;top:187.25px;background:#fff"></div>
<div class="cb" style="left:518.50px;top:187.25px;background:#fff"></div>
<div class="cb" style="left:567.00px;top:187.25px;background:#fff"></div>
<div class="cb" style="left:615.00px;top:187.25px;background:#fff"></div>
<div class="cb" style="left:663.50px;top:187.25px;background:#fff"></div>
<div class="cb" style="left:712.00px;top:187.25px;background:#fff"></div>
<div class="cb" style="left:760.00px;top:187.25px;background:#fff"></div>
<div class="cb" style="left:808.50px;top:187.25px;background:#fff"></div>
<div class="cb" style="left:857.00px;top:187.25px;background:#fff"></div>
<div class="cb" style="left:905.00px;top:187.25px;background:#fff"></div>
<div class="cb on" style="left:953.50px;top:187.25px"><svg width="13" height="13" viewBox="0 0 13 13" style="position:absolute;left:0;top:0"><polyline points="0,6.2 4.3,10.3 12.5,2" fill="none" stroke="#fff" stroke-width="1.7"/></svg></div>
<div class="cb on" style="left:1002.00px;top:187.25px"><svg width="13" height="13" viewBox="0 0 13 13" style="position:absolute;left:0;top:0"><polyline points="0,6.2 4.3,10.3 12.5,2" fill="none" stroke="#fff" stroke-width="1.7"/></svg></div>
<div class="cb on" style="left:1050.50px;top:187.25px"><svg width="13" height="13" viewBox="0 0 13 13" style="position:absolute;left:0;top:0"><polyline points="0,6.2 4.3,10.3 12.5,2" fill="none" stroke="#fff" stroke-width="1.7"/></svg></div>
<div class="cb" style="left:1099.00px;top:187.25px;background:#fff"></div>
<div class="cb" style="left:1147.00px;top:187.25px;background:#fff"></div>
<div class="cb" style="left:1195.50px;top:187.25px;background:#fff"></div>
<div class="cb" style="left:1244.00px;top:187.25px;background:#fff"></div>
<div class="cb" style="left:1292.00px;top:187.25px;background:#fff"></div>
<div class="cb" style="left:1340.50px;top:187.25px;background:#fff"></div>
<div class="cb" style="left:1389.00px;top:187.25px;background:#fff"></div>
<div style="position:absolute;left:0;top:211.5px;width:1422px;height:31.5px;background:#fafafa;border-bottom:1px solid #e0e0e0"></div>
<div class="lab" style="left:50.5px;top:219.75px">UOM Setup</div>
<div class="cb on" style="left:228.50px;top:218.75px"><svg width="13" height="13" viewBox="0 0 13 13" style="position:absolute;left:0;top:0"><polyline points="0,6.2 4.3,10.3 12.5,2" fill="none" stroke="#fff" stroke-width="1.7"/></svg></div>
<div class="cb on" style="left:277.00px;top:218.75px"><svg width="13" height="13" viewBox="0 0 13 13" style="position:absolute;left:0;top:0"><polyline points="0,6.2 4.3,10.3 12.5,2" fill="none" stroke="#fff" stroke-width="1.7"/></svg></div>
<div class="cb on" style="left:325.00px;top:218.75px"><svg width="13" height="13" viewBox="0 0 13 13" style="position:absolute;left:0;top:0"><polyline points="0,6.2 4.3,10.3 12.5,2" fill="none" stroke="#fff" stroke-width="1.7"/></svg></div>
<div class="cb on" style="left:373.50px;top:218.75px"><svg width="13" height="13" viewBox="0 0 13 13" style="position:absolute;left:0;top:0"><polyline points="0,6.2 4.3,10.3 12.5,2" fill="none" stroke="#fff" stroke-width="1.7"/></svg></div>
<div class="cb on" style="left:422.00px;top:218.75px"><svg width="13" height="13" viewBox="0 0 13 13" style="position:absolute;left:0;top:0"><polyline points="0,6.2 4.3,10.3 12.5,2" fill="none" stroke="#fff" stroke-width="1.7"/></svg></div>
<div class="cb" style="left:470.00px;top:218.75px;background:#fafafa"></div>
<div class="cb" style="left:518.50px;top:218.75px;background:#fafafa"></div>
<div class="cb" style="left:567.00px;top:218.75px;background:#fafafa"></div>
<div class="cb" style="left:615.00px;top:218.75px;background:#fafafa"></div>
<div class="cb" style="left:663.50px;top:218.75px;background:#fafafa"></div>
<div class="cb" style="left:712.00px;top:218.75px;background:#fafafa"></div>
<div class="cb" style="left:760.00px;top:218.75px;background:#fafafa"></div>
<div class="cb" style="left:808.50px;top:218.75px;background:#fafafa"></div>
<div class="cb" style="left:857.00px;top:218.75px;background:#fafafa"></div>
<div class="cb" style="left:905.00px;top:218.75px;background:#fafafa"></div>
<div class="cb on" style="left:953.50px;top:218.75px"><svg width="13" height="13" viewBox="0 0 13 13" style="position:absolute;left:0;top:0"><polyline points="0,6.2 4.3,10.3 12.5,2" fill="none" stroke="#fff" stroke-width="1.7"/></svg></div>
<div class="cb on" style="left:1002.00px;top:218.75px"><svg width="13" height="13" viewBox="0 0 13 13" style="position:absolute;left:0;top:0"><polyline points="0,6.2 4.3,10.3 12.5,2" fill="none" stroke="#fff" stroke-width="1.7"/></svg></div>
<div class="cb on" style="left:1050.50px;top:218.75px"><svg width="13" height="13" viewBox="0 0 13 13" style="position:absolute;left:0;top:0"><polyline points="0,6.2 4.3,10.3 12.5,2" fill="none" stroke="#fff" stroke-width="1.7"/></svg></div>
<div class="cb" style="left:1099.00px;top:218.75px;background:#fafafa"></div>
<div class="cb" style="left:1147.00px;top:218.75px;background:#fafafa"></div>
<div class="cb" style="left:1195.50px;top:218.75px;background:#fafafa"></div>
<div class="cb" style="left:1244.00px;top:218.75px;background:#fafafa"></div>
<div class="cb" style="left:1292.00px;top:218.75px;background:#fafafa"></div>
<div class="cb" style="left:1340.50px;top:218.75px;background:#fafafa"></div>
<div class="cb" style="left:1389.00px;top:218.75px;background:#fafafa"></div>
<div style="position:absolute;left:0;top:243px;width:1422px;height:31.5px;background:#fff;border-bottom:1px solid #e0e0e0"></div>
<div class="lab" style="left:50.5px;top:251.25px">UOM Conversion</div>
<div class="cb on" style="left:228.50px;top:250.25px"><svg width="13" height="13" viewBox="0 0 13 13" style="position:absolute;left:0;top:0"><polyline points="0,6.2 4.3,10.3 12.5,2" fill="none" stroke="#fff" stroke-width="1.7"/></svg></div>
<div class="cb on" style="left:277.00px;top:250.25px"><svg width="13" height="13" viewBox="0 0 13 13" style="position:absolute;left:0;top:0"><polyline points="0,6.2 4.3,10.3 12.5,2" fill="none" stroke="#fff" stroke-width="1.7"/></svg></div>
<div class="cb on" style="left:325.00px;top:250.25px"><svg width="13" height="13" viewBox="0 0 13 13" style="position:absolute;left:0;top:0"><polyline points="0,6.2 4.3,10.3 12.5,2" fill="none" stroke="#fff" stroke-width="1.7"/></svg></div>
<div class="cb on" style="left:373.50px;top:250.25px"><svg width="13" height="13" viewBox="0 0 13 13" style="position:absolute;left:0;top:0"><polyline points="0,6.2 4.3,10.3 12.5,2" fill="none" stroke="#fff" stroke-width="1.7"/></svg></div>
<div class="cb on" style="left:422.00px;top:250.25px"><svg width="13" height="13" viewBox="0 0 13 13" style="position:absolute;left:0;top:0"><polyline points="0,6.2 4.3,10.3 12.5,2" fill="none" stroke="#fff" stroke-width="1.7"/></svg></div>
<div class="cb" style="left:470.00px;top:250.25px;background:#fff"></div>
<div class="cb" style="left:518.50px;top:250.25px;background:#fff"></div>
<div class="cb" style="left:567.00px;top:250.25px;background:#fff"></div>
<div class="cb" style="left:615.00px;top:250.25px;background:#fff"></div>
<div class="cb" style="left:663.50px;top:250.25px;background:#fff"></div>
<div class="cb" style="left:712.00px;top:250.25px;background:#fff"></div>
<div class="cb" style="left:760.00px;top:250.25px;background:#fff"></div>
<div class="cb" style="left:808.50px;top:250.25px;background:#fff"></div>
<div class="cb" style="left:857.00px;top:250.25px;background:#fff"></div>
<div class="cb" style="left:905.00px;top:250.25px;background:#fff"></div>
<div class="cb on" style="left:953.50px;top:250.25px"><svg width="13" height="13" viewBox="0 0 13 13" style="position:absolute;left:0;top:0"><polyline points="0,6.2 4.3,10.3 12.5,2" fill="none" stroke="#fff" stroke-width="1.7"/></svg></div>
<div class="cb on" style="left:1002.00px;top:250.25px"><svg width="13" height="13" viewBox="0 0 13 13" style="position:absolute;left:0;top:0"><polyline points="0,6.2 4.3,10.3 12.5,2" fill="none" stroke="#fff" stroke-width="1.7"/></svg></div>
<div class="cb on" style="left:1050.50px;top:250.25px"><svg width="13" height="13" viewBox="0 0 13 13" style="position:absolute;left:0;top:0"><polyline points="0,6.2 4.3,10.3 12.5,2" fill="none" stroke="#fff" stroke-width="1.7"/></svg></div>
<div class="cb" style="left:1099.00px;top:250.25px;background:#fff"></div>
<div class="cb" style="left:1147.00px;top:250.25px;background:#fff"></div>
<div class="cb" style="left:1195.50px;top:250.25px;background:#fff"></div>
<div class="cb" style="left:1244.00px;top:250.25px;background:#fff"></div>
<div class="cb" style="left:1292.00px;top:250.25px;background:#fff"></div>
<div class="cb" style="left:1340.50px;top:250.25px;background:#fff"></div>
<div class="cb" style="left:1389.00px;top:250.25px;background:#fff"></div>
<div style="position:absolute;left:0;top:274.5px;width:1422px;height:31.5px;background:#fafafa;border-bottom:1px solid #e0e0e0"></div>
<div class="lab" style="left:50.5px;top:282.75px">Customers</div>
<div class="cb on" style="left:228.50px;top:281.75px"><svg width="13" height="13" viewBox="0 0 13 13" style="position:absolute;left:0;top:0"><polyline points="0,6.2 4.3,10.3 12.5,2" fill="none" stroke="#fff" stroke-width="1.7"/></svg></div>
<div class="cb on" style="left:277.00px;top:281.75px"><svg width="13" height="13" viewBox="0 0 13 13" style="position:absolute;left:0;top:0"><polyline points="0,6.2 4.3,10.3 12.5,2" fill="none" stroke="#fff" stroke-width="1.7"/></svg></div>
<div class="cb on" style="left:325.00px;top:281.75px"><svg width="13" height="13" viewBox="0 0 13 13" style="position:absolute;left:0;top:0"><polyline points="0,6.2 4.3,10.3 12.5,2" fill="none" stroke="#fff" stroke-width="1.7"/></svg></div>
<div class="cb on" style="left:373.50px;top:281.75px"><svg width="13" height="13" viewBox="0 0 13 13" style="position:absolute;left:0;top:0"><polyline points="0,6.2 4.3,10.3 12.5,2" fill="none" stroke="#fff" stroke-width="1.7"/></svg></div>
<div class="cb on" style="left:422.00px;top:281.75px"><svg width="13" height="13" viewBox="0 0 13 13" style="position:absolute;left:0;top:0"><polyline points="0,6.2 4.3,10.3 12.5,2" fill="none" stroke="#fff" stroke-width="1.7"/></svg></div>
<div class="cb on" style="left:470.00px;top:281.75px"><svg width="13" height="13" viewBox="0 0 13 13" style="position:absolute;left:0;top:0"><polyline points="0,6.2 4.3,10.3 12.5,2" fill="none" stroke="#fff" stroke-width="1.7"/></svg></div>
<div class="cb on" style="left:518.50px;top:281.75px"><svg width="13" height="13" viewBox="0 0 13 13" style="position:absolute;left:0;top:0"><polyline points="0,6.2 4.3,10.3 12.5,2" fill="none" stroke="#fff" stroke-width="1.7"/></svg></div>
<div class="cb on" style="left:567.00px;top:281.75px"><svg width="13" height="13" viewBox="0 0 13 13" style="position:absolute;left:0;top:0"><polyline points="0,6.2 4.3,10.3 12.5,2" fill="none" stroke="#fff" stroke-width="1.7"/></svg></div>
<div class="cb" style="left:615.00px;top:281.75px;background:#fafafa"></div>
<div class="cb" style="left:663.50px;top:281.75px;background:#fafafa"></div>
<div class="cb on" style="left:712.00px;top:281.75px"><svg width="13" height="13" viewBox="0 0 13 13" style="position:absolute;left:0;top:0"><polyline points="0,6.2 4.3,10.3 12.5,2" fill="none" stroke="#fff" stroke-width="1.7"/></svg></div>
<div class="cb on" style="left:760.00px;top:281.75px"><svg width="13" height="13" viewBox="0 0 13 13" style="position:absolute;left:0;top:0"><polyline points="0,6.2 4.3,10.3 12.5,2" fill="none" stroke="#fff" stroke-width="1.7"/></svg></div>
<div class="cb on" style="left:808.50px;top:281.75px"><svg width="13" height="13" viewBox="0 0 13 13" style="position:absolute;left:0;top:0"><polyline points="0,6.2 4.3,10.3 12.5,2" fill="none" stroke="#fff" stroke-width="1.7"/></svg></div>
<div class="cb" style="left:857.00px;top:281.75px;background:#fafafa"></div>
<div class="cb" style="left:905.00px;top:281.75px;background:#fafafa"></div>
<div class="cb on" style="left:953.50px;top:281.75px"><svg width="13" height="13" viewBox="0 0 13 13" style="position:absolute;left:0;top:0"><polyline points="0,6.2 4.3,10.3 12.5,2" fill="none" stroke="#fff" stroke-width="1.7"/></svg></div>
<div class="cb on" style="left:1002.00px;top:281.75px"><svg width="13" height="13" viewBox="0 0 13 13" style="position:absolute;left:0;top:0"><polyline points="0,6.2 4.3,10.3 12.5,2" fill="none" stroke="#fff" stroke-width="1.7"/></svg></div>
<div class="cb on" style="left:1050.50px;top:281.75px"><svg width="13" height="13" viewBox="0 0 13 13" style="position:absolute;left:0;top:0"><polyline points="0,6.2 4.3,10.3 12.5,2" fill="none" stroke="#fff" stroke-width="1.7"/></svg></div>
<div class="cb" style="left:1099.00px;top:281.75px;background:#fafafa"></div>
<div class="cb" style="left:1147.00px;top:281.75px;background:#fafafa"></div>
<div class="cb on" style="left:1195.50px;top:281.75px"><svg width="13" height="13" viewBox="0 0 13 13" style="position:absolute;left:0;top:0"><polyline points="0,6.2 4.3,10.3 12.5,2" fill="none" stroke="#fff" stroke-width="1.7"/></svg></div>
<div class="cb on" style="left:1244.00px;top:281.75px"><svg width="13" height="13" viewBox="0 0 13 13" style="position:absolute;left:0;top:0"><polyline points="0,6.2 4.3,10.3 12.5,2" fill="none" stroke="#fff" stroke-width="1.7"/></svg></div>
<div class="cb on" style="left:1292.00px;top:281.75px"><svg width="13" height="13" viewBox="0 0 13 13" style="position:absolute;left:0;top:0"><polyline points="0,6.2 4.3,10.3 12.5,2" fill="none" stroke="#fff" stroke-width="1.7"/></svg></div>
<div class="cb" style="left:1340.50px;top:281.75px;background:#fafafa"></div>
<div class="cb" style="left:1389.00px;top:281.75px;background:#fafafa"></div>
<div style="position:absolute;left:0;top:306px;width:1422px;height:31.5px;background:#fff;border-bottom:1px solid #e0e0e0"></div>
<div class="lab" style="left:50.5px;top:314.25px">Vendors</div>
<div class="cb on" style="left:228.50px;top:313.25px"><svg width="13" height="13" viewBox="0 0 13 13" style="position:absolute;left:0;top:0"><polyline points="0,6.2 4.3,10.3 12.5,2" fill="none" stroke="#fff" stroke-width="1.7"/></svg></div>
<div class="cb on" style="left:277.00px;top:313.25px"><svg width="13" height="13" viewBox="0 0 13 13" style="position:absolute;left:0;top:0"><polyline points="0,6.2 4.3,10.3 12.5,2" fill="none" stroke="#fff" stroke-width="1.7"/></svg></div>
<div class="cb on" style="left:325.00px;top:313.25px"><svg width="13" height="13" viewBox="0 0 13 13" style="position:absolute;left:0;top:0"><polyline points="0,6.2 4.3,10.3 12.5,2" fill="none" stroke="#fff" stroke-width="1.7"/></svg></div>
<div class="cb on" style="left:373.50px;top:313.25px"><svg width="13" height="13" viewBox="0 0 13 13" style="position:absolute;left:0;top:0"><polyline points="0,6.2 4.3,10.3 12.5,2" fill="none" stroke="#fff" stroke-width="1.7"/></svg></div>
<div class="cb on" style="left:422.00px;top:313.25px"><svg width="13" height="13" viewBox="0 0 13 13" style="position:absolute;left:0;top:0"><polyline points="0,6.2 4.3,10.3 12.5,2" fill="none" stroke="#fff" stroke-width="1.7"/></svg></div>
<div class="cb" style="left:470.00px;top:313.25px;background:#fff"></div>
<div class="cb" style="left:518.50px;top:313.25px;background:#fff"></div>
<div class="cb" style="left:567.00px;top:313.25px;background:#fff"></div>
<div class="cb" style="left:615.00px;top:313.25px;background:#fff"></div>
<div class="cb" style="left:663.50px;top:313.25px;background:#fff"></div>
<div class="cb" style="left:712.00px;top:313.25px;background:#fff"></div>
<div class="cb" style="left:760.00px;top:313.25px;background:#fff"></div>
<div class="cb" style="left:808.50px;top:313.25px;background:#fff"></div>
<div class="cb" style="left:857.00px;top:313.25px;background:#fff"></div>
<div class="cb" style="left:905.00px;top:313.25px;background:#fff"></div>
<div class="cb on" style="left:953.50px;top:313.25px"><svg width="13" height="13" viewBox="0 0 13 13" style="position:absolute;left:0;top:0"><polyline points="0,6.2 4.3,10.3 12.5,2" fill="none" stroke="#fff" stroke-width="1.7"/></svg></div>
<div class="cb on" style="left:1002.00px;top:313.25px"><svg width="13" height="13" viewBox="0 0 13 13" style="position:absolute;left:0;top:0"><polyline points="0,6.2 4.3,10.3 12.5,2" fill="none" stroke="#fff" stroke-width="1.7"/></svg></div>
<div class="cb on" style="left:1050.50px;top:313.25px"><svg width="13" height="13" viewBox="0 0 13 13" style="position:absolute;left:0;top:0"><polyline points="0,6.2 4.3,10.3 12.5,2" fill="none" stroke="#fff" stroke-width="1.7"/></svg></div>
<div class="cb" style="left:1099.00px;top:313.25px;background:#fff"></div>
<div class="cb" style="left:1147.00px;top:313.25px;background:#fff"></div>
<div class="cb on" style="left:1195.50px;top:313.25px"><svg width="13" height="13" viewBox="0 0 13 13" style="position:absolute;left:0;top:0"><polyline points="0,6.2 4.3,10.3 12.5,2" fill="none" stroke="#fff" stroke-width="1.7"/></svg></div>
<div class="cb on" style="left:1244.00px;top:313.25px"><svg width="13" height="13" viewBox="0 0 13 13" style="position:absolute;left:0;top:0"><polyline points="0,6.2 4.3,10.3 12.5,2" fill="none" stroke="#fff" stroke-width="1.7"/></svg></div>
<div class="cb on" style="left:1292.00px;top:313.25px"><svg width="13" height="13" viewBox="0 0 13 13" style="position:absolute;left:0;top:0"><polyline points="0,6.2 4.3,10.3 12.5,2" fill="none" stroke="#fff" stroke-width="1.7"/></svg></div>
<div class="cb" style="left:1340.50px;top:313.25px;background:#fff"></div>
<div class="cb" style="left:1389.00px;top:313.25px;background:#fff"></div>
<div style="position:absolute;left:0;top:337.5px;width:1422px;height:39.1px;background:#fafafa;border-bottom:1px solid #e0e0e0"></div>
<svg class="ic" style="left:12.2px;top:345.05px;width:24px;height:24px;" viewBox="0 0 24 24"><path fill="#333" d="M16.59 8.59L12 13.17 7.41 8.59 6 10l6 6 6-6z"/></svg>
<div class="grp" style="left:42.5px;top:348.25px;letter-spacing:.1px">Organization Setup</div>
<div class="cb" style="left:228.50px;top:348.55px;background:#fafafa"></div>
<div class="cb" style="left:277.00px;top:348.55px;background:#fafafa"></div>
<div class="cb" style="left:325.00px;top:348.55px;background:#fafafa"></div>
<div class="cb" style="left:373.50px;top:348.55px;background:#fafafa"></div>
<div class="cb" style="left:422.00px;top:348.55px;background:#fafafa"></div>
<div class="cb" style="left:470.00px;top:348.55px;background:#fafafa"></div>
<div class="cb" style="left:518.50px;top:348.55px;background:#fafafa"></div>
<div class="cb" style="left:567.00px;top:348.55px;background:#fafafa"></div>
<div class="cb" style="left:615.00px;top:348.55px;background:#fafafa"></div>
<div class="cb" style="left:663.50px;top:348.55px;background:#fafafa"></div>
<div class="cb" style="left:712.00px;top:348.55px;background:#fafafa"></div>
<div class="cb" style="left:760.00px;top:348.55px;background:#fafafa"></div>
<div class="cb" style="left:808.50px;top:348.55px;background:#fafafa"></div>
<div class="cb" style="left:857.00px;top:348.55px;background:#fafafa"></div>
<div class="cb" style="left:905.00px;top:348.55px;background:#fafafa"></div>
<div class="cb" style="left:953.50px;top:348.55px;background:#fafafa"></div>
<div class="cb" style="left:1002.00px;top:348.55px;background:#fafafa"></div>
<div class="cb" style="left:1050.50px;top:348.55px;background:#fafafa"></div>
<div class="cb" style="left:1099.00px;top:348.55px;background:#fafafa"></div>
<div class="cb" style="left:1147.00px;top:348.55px;background:#fafafa"></div>
<div class="cb" style="left:1195.50px;top:348.55px;background:#fafafa"></div>
<div class="cb" style="left:1244.00px;top:348.55px;background:#fafafa"></div>
<div class="cb" style="left:1292.00px;top:348.55px;background:#fafafa"></div>
<div class="cb" style="left:1340.50px;top:348.55px;background:#fafafa"></div>
<div class="cb" style="left:1389.00px;top:348.55px;background:#fafafa"></div>
<div style="position:absolute;left:0;top:376.6px;width:1422px;height:31.5px;background:#fff;border-bottom:1px solid #e0e0e0"></div>
<div class="lab" style="left:50.5px;top:384.85px"></div>
<div class="dl" style="left:211.00px;top:0;height:380px;width:2px;background:#e0e0e0"></div>
<div class="dl" style="left:261.00px;top:0;height:380px"></div>
<div class="dl" style="left:309.00px;top:0;height:380px"></div>
<div class="dl" style="left:357.00px;top:0;height:380px"></div>
<div class="dl" style="left:406.00px;top:0;height:380px"></div>
<div class="dl" style="left:454.00px;top:0;height:380px"></div>
<div class="dl" style="left:502.00px;top:0;height:380px"></div>
<div class="dl" style="left:551.00px;top:0;height:380px"></div>
<div class="dl" style="left:599.00px;top:0;height:380px"></div>
<div class="dl" style="left:647.00px;top:0;height:380px"></div>
<div class="dl" style="left:696.00px;top:0;height:380px"></div>
<div class="dl" style="left:744.00px;top:0;height:380px"></div>
<div class="dl" style="left:792.00px;top:0;height:380px"></div>
<div class="dl" style="left:841.00px;top:0;height:380px"></div>
<div class="dl" style="left:889.00px;top:0;height:380px"></div>
<div class="dl" style="left:937.00px;top:0;height:380px"></div>
<div class="dl" style="left:986.00px;top:0;height:380px"></div>
<div class="dl" style="left:1034.00px;top:0;height:380px"></div>
<div class="dl" style="left:1083.00px;top:0;height:380px"></div>
<div class="dl" style="left:1131.00px;top:0;height:380px"></div>
<div class="dl" style="left:1179.00px;top:0;height:380px"></div>
<div class="dl" style="left:1228.00px;top:0;height:380px"></div>
<div class="dl" style="left:1276.00px;top:0;height:380px"></div>
<div class="dl" style="left:1324.00px;top:0;height:380px"></div>
<div class="dl" style="left:1373.00px;top:0;height:380px"></div>
<div class="dl" style="left:1421.00px;top:0;height:380px"></div>
</div>
<div style="position:absolute;left:1843px;top:325px;width:19px;height:525px;background:#f1f1f1;border-right:1px solid #e6e6e6"></div>
<svg class="ic" style="left:1846px;top:331px;width:13px;height:10px" viewBox="0 0 13 10"><path d="M6.5 0.5 L12.5 9.5 L0.5 9.5z" fill="#c1c1c1" stroke="#c1c1c1" stroke-linejoin="round"/></svg>
<div style="position:absolute;left:1847px;top:348px;width:11px;height:98px;border-radius:5.5px;background:#c1c1c1"></div>
<div style="position:absolute;left:1847px;top:847.5px;width:11px;height:4px;border-radius:2px;background:#c1c1c1"></div>
<div style="position:absolute;left:0;top:850px;width:1892px;height:39px;background:#d3d3d3;border-top:1px solid #6e6e6e;border-right:1px solid #6e6e6e;z-index:6">
<div class="t" style="left:7px;top:10.5px;font-size:16px;color:#222;line-height:16px;letter-spacing:.2px">System ready</div>
<div class="t" style="left:658px;top:10.5px;font-size:16px;color:#222;line-height:16px;letter-spacing:.2px">User: admin</div>
<div class="chip" style="left:1701px;top:4px;width:79px;background:#2e7d32"><svg class="ic" style="left:5px;top:6px;width:18px;height:18px;" viewBox="0 0 24 24"><path fill="#fff" d="M1 9l2 2c4.97-4.97 13.03-4.97 18 0l2-2C16.93 2.93 7.08 2.93 1 9zm8 8l3 3 3-3c-1.65-1.66-4.34-1.66-6 0zm-4-4l2 2c2.76-2.76 7.24-2.76 10 0l2-2C15.14 9.14 8.87 9.14 5 13z"/></svg><div class="t" style="left:27px;top:8px;font-size:14px;letter-spacing:.4px">Online</div></div>
<div class="chip" style="left:1790px;top:4px;width:86px;background:#2e7d32"><svg class="ic" style="left:5px;top:6px;width:18px;height:18px;" viewBox="0 0 24 24"><path fill="#fff" d="M12 4V1L8 5l4 4V6c3.31 0 6 2.69 6 6 0 1.01-.25 1.97-.7 2.8l1.46 1.46C19.54 15.03 20 13.57 20 12c0-4.42-3.58-8-8-8zm0 14c-3.31 0-6-2.69-6-6 0-1.01.25-1.97.7-2.8L5.24 7.74C4.46 8.97 4 10.43 4 12c0 4.42 3.58 8 8 8v3l4-4-4-4v3z"/></svg><div class="t" style="left:28px;top:8px;font-size:14px;letter-spacing:.4px">Synced</div></div>
</div>
<div style="position:absolute;left:0;top:889px;width:1892px;height:3px;background:#222;z-index:6"></div>
</body></html>
